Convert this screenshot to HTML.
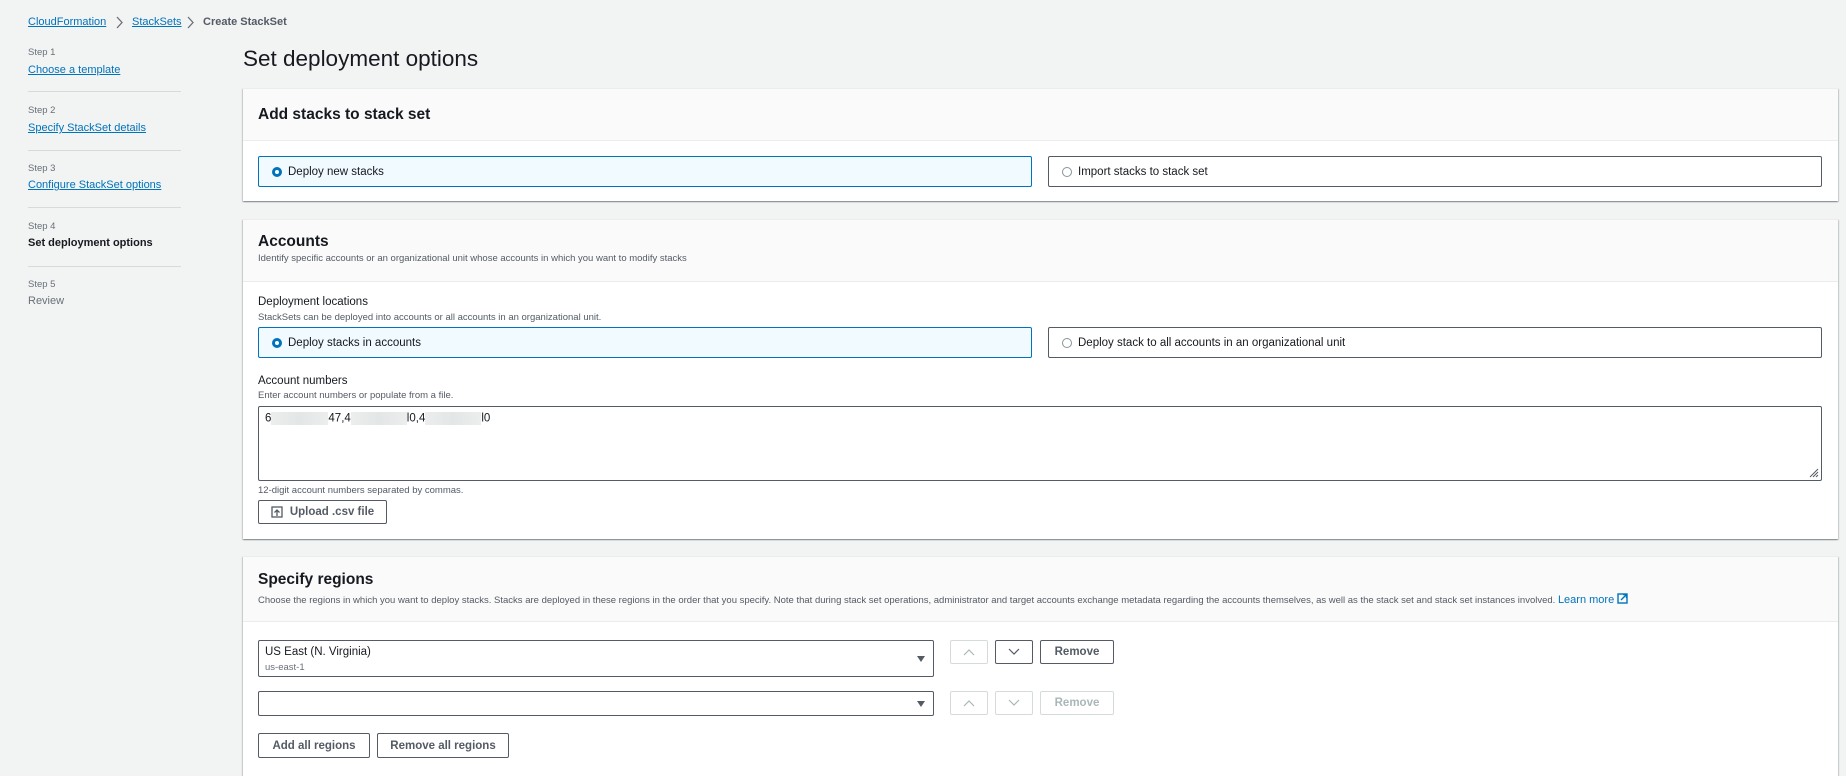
<!DOCTYPE html>
<html><head><meta charset="utf-8"><style>
*{box-sizing:border-box;margin:0;padding:0}
body{width:1846px;height:772px;background:#f2f3f3;font-family:"Liberation Sans",sans-serif;color:#16191f;position:relative;overflow:hidden}
.a{position:absolute;white-space:nowrap}
a,.lk{color:#0073bb;text-decoration:underline}
.crumb{top:16px;font-size:11px}
.sm{font-size:9.5px;color:#545b64}
.step{font-size:9.5px;color:#687078}
.slink{font-size:11px}
.hr{position:absolute;left:28px;width:153px;height:1px;background:#d5dbdb}
.panel{position:absolute;left:243px;width:1595px;background:#fff;box-shadow:0 1px 1px 0 rgba(0,28,36,.3),1px 1px 1px 0 rgba(0,28,36,.15),-1px 1px 1px 0 rgba(0,28,36,.15);border-top:1px solid #eaeded}
.ph{position:absolute;left:0;top:0;width:100%;background:#fafafa;border-bottom:1px solid #eaeded}
.h2{font-size:15.5px;font-weight:bold}
.tile{position:absolute;border:1px solid #545b64;border-radius:2px;background:#fff;font-size:11.5px}
.tile.sel{border-color:#0073bb;background:#f1faff}
.rad{position:absolute;left:13px;top:50%;margin-top:-5px;width:10px;height:10px;border-radius:50%;border:1px solid #879596;background:#fff}
.sel .rad{border:3px solid #0073bb}
.tile span{position:absolute;left:29px;top:50%;transform:translateY(-50%)}
.btn{position:absolute;border:1px solid #545b64;border-radius:2px;background:#fff;font-size:11.5px;font-weight:bold;color:#545b64;display:flex;align-items:center;justify-content:center}
.dis{border-color:#d5dbdb;color:#aab7b8}
.sel2{position:absolute;left:15px;width:676px;border:1px solid #545b64;border-radius:2px;background:#fff}
.caret{position:absolute;right:8px;top:50%;margin-top:-3px;width:0;height:0;border-left:4px solid transparent;border-right:4px solid transparent;border-top:6px solid #545b64}
.blur{display:inline-block;height:13px;background:linear-gradient(90deg,#eceeee,#e3e6e6,#eceeee);vertical-align:middle}
</style></head><body>

<div class="a crumb" style="left:28px"><a>CloudFormation</a></div>
<svg class="a" style="left:115px;top:16px" width="9" height="13"><path d="M2 1l5 5.5-5 5.5" fill="none" stroke="#687078" stroke-width="1.3"/></svg>
<div class="a crumb" style="left:132px"><a>StackSets</a></div>
<svg class="a" style="left:186px;top:16px" width="9" height="13"><path d="M2 1l5 5.5-5 5.5" fill="none" stroke="#687078" stroke-width="1.3"/></svg>
<div class="a crumb" style="left:203px;color:#545b64;font-weight:bold">Create StackSet</div>

<div class="a step" style="left:28px;top:47px">Step 1</div>
<div class="a slink" style="left:28px;top:64px"><a>Choose a template</a></div>
<div class="hr" style="top:91px"></div>
<div class="a step" style="left:28px;top:105px">Step 2</div>
<div class="a slink" style="left:28px;top:122px"><a>Specify StackSet details</a></div>
<div class="hr" style="top:150px"></div>
<div class="a step" style="left:28px;top:163px">Step 3</div>
<div class="a slink" style="left:28px;top:179px"><a>Configure StackSet options</a></div>
<div class="hr" style="top:207px"></div>
<div class="a step" style="left:28px;top:221px">Step 4</div>
<div class="a slink" style="left:28px;top:237px;font-weight:bold">Set deployment options</div>
<div class="hr" style="top:266px"></div>
<div class="a step" style="left:28px;top:279px">Step 5</div>
<div class="a slink" style="left:28px;top:295px;color:#687078">Review</div>

<div class="a" style="left:243px;top:46px;font-size:22.5px">Set deployment options</div>

<!-- panel 1 -->
<div class="panel" style="top:88px;height:113px">
  <div class="ph" style="height:52px"><div class="a h2" style="left:15px;top:17px">Add stacks to stack set</div></div>
  <div class="tile sel" style="left:15px;top:67px;width:774px;height:31px"><div class="rad"></div><span>Deploy new stacks</span></div>
  <div class="tile" style="left:805px;top:67px;width:774px;height:31px"><div class="rad"></div><span>Import stacks to stack set</span></div>
</div>

<!-- panel 2 -->
<div class="panel" style="top:219px;height:320px">
  <div class="ph" style="height:62px">
    <div class="a h2" style="left:15px;top:13px">Accounts</div>
    <div class="a sm" style="left:15px;top:33px">Identify specific accounts or an organizational unit whose accounts in which you want to modify stacks</div>
  </div>
  <div class="a" style="left:15px;top:76px;font-size:11.5px">Deployment locations</div>
  <div class="a sm" style="left:15px;top:92px">StackSets can be deployed into accounts or all accounts in an organizational unit.</div>
  <div class="tile sel" style="left:15px;top:107px;width:774px;height:31px"><div class="rad"></div><span>Deploy stacks in accounts</span></div>
  <div class="tile" style="left:805px;top:107px;width:774px;height:31px"><div class="rad"></div><span>Deploy stack to all accounts in an organizational unit</span></div>
  <div class="a" style="left:15px;top:155px;font-size:11.5px">Account numbers</div>
  <div class="a sm" style="left:15px;top:170px">Enter account numbers or populate from a file.</div>
  <div class="a" style="left:15px;top:186px;width:1564px;height:75px;border:1px solid #545b64;border-radius:2px;background:#fff">
    <div class="a" style="left:6px;top:5px;font-size:11.5px">6<span class="blur" style="width:57px"></span>47,4<span class="blur" style="width:56px"></span>l0,4<span class="blur" style="width:56px"></span>l0</div>
    <svg class="a" style="right:2px;bottom:2px" width="10" height="10"><path d="M9 1L1 9M9 4L4 9M9 7L7 9" stroke="#545b64" stroke-width="1"/></svg>
  </div>
  <div class="a sm" style="left:15px;top:265px">12-digit account numbers separated by commas.</div>
  <div class="btn" style="left:15px;top:280px;width:129px;height:24px"><svg width="12" height="12" style="margin-right:7px"><rect x="1" y="1" width="10" height="10" fill="none" stroke="#545b64" stroke-width="1.3"/><path d="M6 10V4M3.5 6.5L6 4l2.5 2.5" fill="none" stroke="#545b64" stroke-width="1.3"/></svg>Upload .csv file</div>
</div>

<!-- panel 3 -->
<div class="panel" style="top:556px;height:220px">
  <div class="ph" style="height:65px">
    <div class="a h2" style="left:15px;top:14px">Specify regions</div>
    <div class="a sm" style="left:15px;top:36px">Choose the regions in which you want to deploy stacks. Stacks are deployed in these regions in the order that you specify. Note that during stack set operations, administrator and target accounts exchange metadata regarding the accounts themselves, as well as the stack set and stack set instances involved. <span class="lk" style="text-decoration:none;font-size:11px">Learn more</span> <svg width="11" height="11" style="vertical-align:-1px"><rect x="1" y="1" width="9" height="9" fill="none" stroke="#0073bb" stroke-width="1.4"/><path d="M4 7l5-5M6 1.5h3.5V5" fill="none" stroke="#0073bb" stroke-width="1.4"/></svg></div>
  </div>
  <div class="sel2" style="top:83px;height:37px">
    <div class="a" style="left:6px;top:5px;font-size:11.5px">US East (N. Virginia)</div>
    <div class="a" style="left:6px;top:21px;font-size:9.5px;color:#687078">us-east-1</div>
    <div class="caret"></div>
  </div>
  <div class="btn dis" style="left:707px;top:83px;width:38px;height:24px"><svg width="12" height="8"><path d="M1 7l5-5 5 5" fill="none" stroke="#aab7b8" stroke-width="1.2"/></svg></div>
  <div class="btn" style="left:752px;top:83px;width:38px;height:24px"><svg width="12" height="8"><path d="M1 1l5 5 5-5" fill="none" stroke="#545b64" stroke-width="1.2"/></svg></div>
  <div class="btn" style="left:797px;top:83px;width:74px;height:24px">Remove</div>

  <div class="sel2" style="top:134px;height:25px"><div class="caret"></div></div>
  <div class="btn dis" style="left:707px;top:134px;width:38px;height:24px"><svg width="12" height="8"><path d="M1 7l5-5 5 5" fill="none" stroke="#aab7b8" stroke-width="1.2"/></svg></div>
  <div class="btn dis" style="left:752px;top:134px;width:38px;height:24px"><svg width="12" height="8"><path d="M1 1l5 5 5-5" fill="none" stroke="#aab7b8" stroke-width="1.2"/></svg></div>
  <div class="btn dis" style="left:797px;top:134px;width:74px;height:24px">Remove</div>

  <div class="btn" style="left:15px;top:176px;width:112px;height:25px">Add all regions</div>
  <div class="btn" style="left:134px;top:176px;width:132px;height:25px">Remove all regions</div>
</div>
</body></html>
